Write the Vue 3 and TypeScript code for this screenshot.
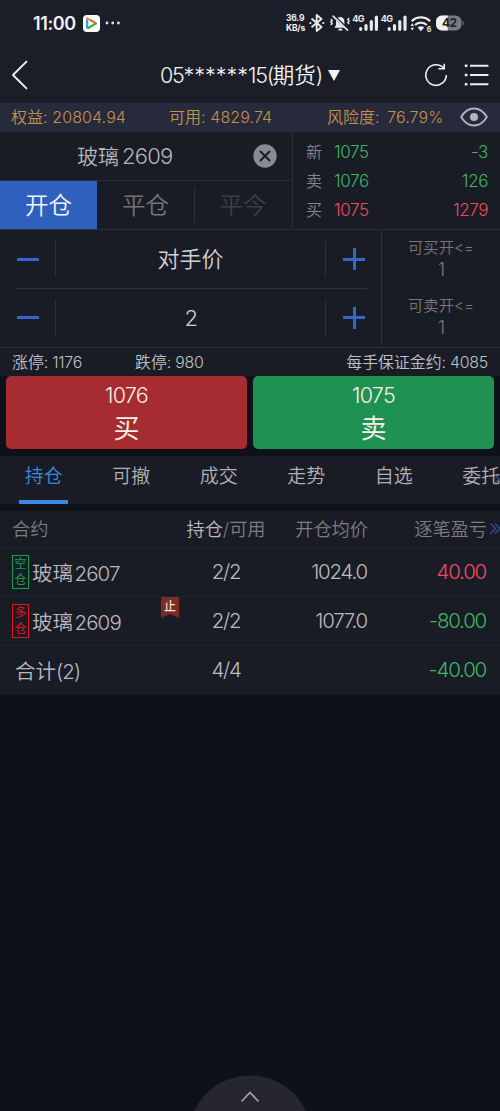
<script setup lang="ts">
interface Quote { label: string; price: string; volume: string; tone: string }
interface Position { side?: string; tone?: string; name: string; code: string; stop?: boolean; amount: string; price: string; profit: string; up?: boolean }

const quotes: Quote[] = [
  { label: '新', price: '1075', volume: '-3', tone: 'green' },
  { label: '卖', price: '1076', volume: '126', tone: 'green' },
  { label: '买', price: '1075', volume: '1279', tone: 'red' },
]
const steppers = [
  { value: '对手价', cls: 'cjk' },
  { value: '2', cls: 'num' },
]
const limits = [
  { label: '可买开<=', value: '1' },
  { label: '可卖开<=', value: '1' },
]
const tabs = ['持仓', '可撤', '成交', '走势', '自选', '委托']
const positions: Position[] = [
  { side: '空仓', tone: 'short', name: '玻璃', code: '2607', amount: '2/2', price: '1024.0', profit: '40.00', up: true },
  { side: '多仓', tone: 'long', name: '玻璃', code: '2609', stop: true, amount: '2/2', price: '1077.0', profit: '-80.00' },
  { name: '合计', code: '(2)', amount: '4/4', price: '', profit: '-40.00' },
]
</script>

<template>
  <div class="screen">
    <header class="status">
      <span class="clock">11:00</span>
      <svg class="app-icon" width="17" height="17" viewBox="0 0 17 17">
        <rect width="17" height="17" rx="4" fill="#fff" />
        <path d="M4.2 3.6v9" stroke="#2d9bf0" stroke-width="2.2" stroke-linecap="round" />
        <path d="M4.2 3.4 9 5.9" stroke="#ff9a2e" stroke-width="2.2" stroke-linecap="round" />
        <path d="M8 5.4 12.8 8.5" stroke="#f46a35" stroke-width="2.2" stroke-linecap="round" />
        <path d="M12.7 8.6 5.2 13" stroke="#35b34a" stroke-width="2.2" stroke-linecap="round" />
      </svg>
      <svg class="dots" width="16" height="4" viewBox="0 0 16 4" fill="#e4e6ea">
        <circle cx="2" cy="2" r="1.4" /><circle cx="7.700" cy="2" r="1.4" /><circle cx="13.400" cy="2" r="1.4" />
      </svg>
      <span class="speed"><b>36.9</b><b>KB/s</b></span>
      <svg class="signals" width="156" height="20" viewBox="0 0 156 20" fill="none" stroke="#e8eaed">
        <path d="M2.500 5.500 12.500 14 7.700 18V2l4.800 4L2.500 14.300" stroke-width="1.900" stroke-linejoin="round" />
        <path d="M1.300 10h.1M14.200 10h.1" stroke-width="2.200" stroke-linecap="round" />
        <g>
          <path d="M25.500 14.800h11.600l-1.700-2.700V8.200a4.200 4.200 0 0 0-8.400 0v3.900z" fill="#e8eaed" stroke="none" />
          <path d="M29.400 16.600h3.800" stroke-width="1.800" />
          <path d="M24.600 3 40 17.500" stroke="#1b1e28" stroke-width="3" />
          <path d="M23.600 2.600 39 17.600" stroke-width="1.600" />
          <path d="m21.800 6 1.400 1.500-1.400 1.500 1.400 1.500-1.400 1.500M40.200 5l-1.400 1.500 1.400 1.500-1.400 1.500 1.400 1.500" stroke-width="1.400" />
        </g>
        <g stroke-width="3.200" stroke-linecap="round">
          <path d="M51.700 15.500v.8M57 12.500v3.800M62.300 8.500v7.800M67.400 4v12.300" />
          <path d="M80.200 15.500v.8M85.500 12.500v3.800M90.800 8.500v7.800M96 4v12.300" />
        </g>
        <g fill="#e8eaed" stroke="none" class="net">
          <text x="43.200" y="8.500">4G</text><text x="71.700" y="8.500">4G</text>
        </g>
        <g stroke-width="2.300">
          <path d="M102.700 8.200a13 13 0 0 1 18.400 0M106 12a8.300 8.300 0 0 1 11.800 0" />
          <path d="m108.600 14.600 3.300 3.700 3.300-3.700a5 5 0 0 0-6.600 0z" fill="#e8eaed" stroke="none" />
          <path d="m101.500 13 1.800-2.800 1.800 2.800zM101.500 14.800l1.800 2.800 1.800-2.800z" fill="#e8eaed" stroke="none" />
        </g>
        <text x="117.800" y="18.500" class="six" fill="#e8eaed" stroke="none">6</text>
        <rect x="127" y="2.600" width="25.500" height="15" rx="6" fill="#797b80" stroke="none" />
        <path d="M133 2.600h5.800v15H133a6 6 0 0 1-6-6V8.600a6 6 0 0 1 6-6z" fill="#f0f1f3" stroke="none" />
        <path d="M153.500 7.500q2.500 2.600 0 5.200z" fill="#797b80" stroke="none" />
        <text x="133" y="14.400" class="battery" fill="#1b1e28" stroke="none">42</text>
      </svg>
    </header>

    <nav class="nav">
      <svg width="18" height="30" viewBox="0 0 18 30" fill="none" stroke="#f2f3f5" stroke-width="1.800" stroke-linecap="round" stroke-linejoin="round"><path d="M15.500 1.500 2 15l13.500 13.500" /></svg>
      <div class="account"><span class="num">05<span class="stars">******</span>15(</span>期货<span class="num">)</span><i class="caret"></i></div>
      <svg class="refresh" width="24" height="24" viewBox="0 0 24 24" fill="none" stroke="#eceef1" stroke-width="1.600"><path d="M22.400 12A10.300 10.300 0 1 1 19.800 5.200M14.500 5.800h5.800V.6" /></svg>
      <svg class="list" width="25" height="24" viewBox="0 0 25 24" stroke="#eceef1" stroke-width="1.800"><path d="M6 2.700h18.500M6 12h18.500M6 21.300h18.500" /><path d="M.8 2.700h2.600M.8 12h2.600M.8 21.300h2.600" stroke-width="2.600" /></svg>
    </nav>

    <section class="funds">
      <div class="equity">权益<span class="num">: 20804.94</span></div>
      <div class="free">可用<span class="num">: 4829.74</span></div>
      <div class="risk">风险度<span class="num">: 76.79%</span></div>
      <svg width="28" height="20" viewBox="0 0 28 20" fill="none" stroke="#b0b2bf" stroke-width="1.900"><path d="M1.200 10C4.500 4.300 8.800 1.500 14 1.500S23.500 4.300 26.800 10C23.500 15.700 19.200 18.500 14 18.500S4.500 15.700 1.200 10z" /><circle cx="14" cy="10" r="4" fill="#b0b2bf" stroke="none" /></svg>
    </section>

    <section class="market">
      <div class="contract">
        <div class="picker">
          <span class="symbol">玻璃<span class="num">2609</span></span>
          <svg width="24" height="24" viewBox="0 0 24 24"><circle cx="12" cy="12" r="11.700" fill="#8a8b90" /><path d="m7 7 10 10M17 7 7 17" stroke="#191c25" stroke-width="2" /></svg>
        </div>
        <div class="modes">
          <span class="mode active">开仓</span>
          <span class="mode">平仓</span>
          <span class="mode off">平今</span>
        </div>
      </div>
      <div class="quotes">
        <div v-for="q in quotes" :key="q.label" class="quote">
          <span>{{ q.label }}</span>
          <span class="num" :class="q.tone">{{ q.price }}</span>
          <span class="num vol" :class="q.tone">{{ q.volume }}</span>
        </div>
      </div>
    </section>

    <section class="order">
      <div class="steppers">
        <div v-for="s in steppers" :key="s.value" class="stepper">
          <i class="minus"></i>
          <span class="field" :class="s.cls">{{ s.value }}</span>
          <i class="plus"></i>
        </div>
      </div>
      <div class="limits">
        <div v-for="l in limits" :key="l.label" class="limit">
          <span>{{ l.label }}</span><span class="num one">{{ l.value }}</span>
        </div>
      </div>
    </section>

    <section class="bounds">
      <span class="ceil">涨停<span class="num">: 1176</span></span>
      <span>跌停<span class="num">: 980</span></span>
      <span class="margin">每手保证金约<span class="num">: 4085</span></span>
    </section>

    <section class="actions">
      <button class="buy"><span class="num">1076</span><b>买</b></button>
      <button class="sell"><span class="num">1075</span><b>卖</b></button>
    </section>

    <div class="tabs">
      <span v-for="(t, i) in tabs" :key="t" class="tab" :class="{ current: i === 0 }">{{ t }}</span>
      <svg class="more-mark" width="5" height="10" viewBox="0 0 5 10" fill="none" stroke="#2d50a5" stroke-width="1.300"><path d="m0 1 4 4-4 4" /></svg>
    </div>

    <section class="table">
      <div class="row head">
        <span class="name">合约</span>
        <span class="amount"><em>持仓</em>/可用</span>
        <span class="price">开仓均价</span>
        <span class="profit">逐笔盈亏</span>
        <svg width="10" height="13" viewBox="0 0 10 13" fill="none" stroke="#2d50a5" stroke-width="1.300"><path d="m.5 1.500 5 5-5 5M5 1.500l5 5-5 5" /></svg>
      </div>
      <div v-for="p in positions" :key="p.name + p.code" class="row">
        <span class="name" :class="{ total: !p.side }">
          <span v-if="p.side" class="side" :class="p.tone"><i v-for="c in p.side" :key="c">{{ c }}</i></span>
          <span>{{ p.name }}<span class="num code">{{ p.code }}</span></span>
          <svg v-if="p.stop" class="stop" width="18" height="21" viewBox="0 0 18 21"><path d="M0 0h18v21l-9-4-9 4z" fill="#7a2d20" /><text x="9" y="14" text-anchor="middle">止</text></svg>
        </span>
        <span class="amount num">{{ p.amount }}</span>
        <span class="price num">{{ p.price }}</span>
        <span class="profit num" :class="p.up ? 'red' : 'green'">{{ p.profit }}</span>
      </div>
    </section>

    <footer class="drawer">
      <div class="handle">
        <svg width="20" height="12" viewBox="0 0 20 12" fill="none" stroke="#a2a3a8" stroke-width="1.800"><path d="m1.500 10.500 8.500-9 8.500 9" /></svg>
      </div>
    </footer>
  </div>
</template>

<style>
body { background: #0e1119; }
</style>

<style scoped>
.screen {
  width: 500px; height: 1111px; display: flex; flex-direction: column; overflow: hidden;
  background: #0e1119; color: #c3c4c8; font-family: Inter, "Noto Sans CJK SC", sans-serif; font-weight: 350;
  white-space: nowrap; box-sizing: border-box;
}
.num { letter-spacing: -0.06em; font-weight: 350; }
.green { color: #3fb566; }
.red { color: #f04a62; }
i, em { font-style: normal; }

.status { height: 46px; flex: none; display: flex; align-items: center; padding-left: 33px; background: #1b1e28; color: #f0f1f3; }
.clock { width: 50px; font-size: 18px; font-weight: 600; letter-spacing: -.4px; }
.dots { margin-left: 5px; }
.speed { display: flex; flex-direction: column; margin-left: 165px; width: 21px; font-size: 8.500px; line-height: 10px; letter-spacing: -.2px; }
.speed b { font-weight: 700; }
.signals { margin-left: 2px; }
.net { font-size: 9px; font-weight: 700; letter-spacing: -.4px; }
.six { font-size: 7px; font-weight: 700; }
.battery { font-size: 12px; font-weight: 700; letter-spacing: -.5px; }

.nav { height: 57px; flex: none; display: flex; align-items: center; padding: 1px 11px 0 11px; box-sizing: border-box; background: #1b1e28; color: #f2f3f5; }
.account { display: flex; align-items: center; margin-left: 131px; font-size: 21.500px; line-height: 30px; width: 265px; }
.account .stars { letter-spacing: 0; }
.caret { margin-left: 6px; border: 6.500px solid transparent; border-top: 11px solid #f2f3f5; border-bottom: 0; }
.list { margin-left: 16px; }

.funds { height: 29px; flex: none; display: flex; align-items: center; padding-left: 11px; background: #262a3b; color: #c5924c; font-size: 16px; }
.funds div { line-height: 29px; }
.funds .num { letter-spacing: .1px; }
.funds svg { margin-top: -1px; }
.equity { width: 158px; }
.free { width: 158px; }
.risk { width: 133px; word-spacing: 3px; }

.market { height: 98px; flex: none; display: flex; background: #191c25; border-bottom: 1px solid #2c2f38; box-sizing: border-box; }
.contract { width: 293px; border-right: 1px solid #2c2f38; box-sizing: border-box; }
.picker { height: 49px; display: flex; align-items: center; padding-left: 77px; box-sizing: border-box; border-bottom: 1px solid #2c2f38; color: #b4b5ba; font-size: 21px; }
.symbol { width: 176px; margin-top: -2px; }
.symbol .num { margin-left: 3px; font-size: 22px; letter-spacing: -.8px; }
.modes { height: 48px; display: flex; }
.mode { width: 97px; font-size: 23.500px; line-height: 50px; text-align: center; color: #73757c; }
.mode.active { background: #3060bd; color: #f4f6fa; }
.mode.off { color: #3c3f48; border-left: 1px solid #2c2f38; box-sizing: border-box; height: 36px; margin-top: 6px; line-height: 38px; }
.quotes { flex: 1; padding: 6px 12px 0 13px; }
.quote { display: flex; height: 29px; line-height: 29px; font-size: 16px; color: #85868c; }
.quote .num { margin-left: 12px; font-size: 17px; letter-spacing: -.4px; }
.quote .num.red { color: #f04a62; }
.quote .num.green { color: #3fb566; }
.quote .num.vol { margin-left: auto; }

.order { height: 118px; flex: none; display: flex; background: #191c25; border-bottom: 1px solid #2c2f38; box-sizing: border-box; }
.steppers { width: 381px; border-right: 1px solid #2c2f38; }
.stepper { height: 57px; display: flex; align-items: center; margin: 0 14px 0 16px; padding-left: 1px; }
.stepper:first-child { height: 58px; border-bottom: 1px solid #2c2f38; }
.minus, .plus { width: 22px; height: 3px; flex: none; background: #3765c9; }
.plus { position: relative; margin-left: 17px; }
.plus::after { content: ""; position: absolute; left: 9.500px; top: -9.500px; width: 3px; height: 22px; background: #3765c9; }
.field { width: 269px; margin-left: 16px; height: 36px; line-height: 36px; text-align: center; font-size: 22px; border: 1px solid #2c2f38; border-width: 0 1px; color: #d0d1d5; }
.limits { flex: 1; }
.limit { height: 58px; padding-top: 6px; box-sizing: border-box; display: flex; flex-direction: column; align-items: center; font-size: 15.300px; line-height: 23px; color: #75777d; }
.one { font-size: 18px; line-height: 22px; }

.bounds { height: 28px; flex: none; display: flex; padding: 0 12px; background: #191c25; line-height: 29px; font-size: 15.900px; color: #c0c1c5; }
.bounds .num { letter-spacing: -.25px; }
.ceil { width: 123px; }
.margin { margin-left: auto; }

.actions { display: flex; gap: 6px; height: 80px; flex: none; padding: 0 6px 7px; box-sizing: border-box; background: #0e1119; }
.actions button { flex: 1; display: flex; flex-direction: column; align-items: center; border: 0; padding: 3px 0 0; border-radius: 5px; color: #f7efe9; font: 350 21.500px/33px Inter, "Noto Sans CJK SC", sans-serif; }
.actions .num { letter-spacing: -.7px; }
.actions b { font-weight: 400; font-size: 26px; line-height: 33px; }
.buy { background: #a62c31; }
.sell { background: #1f9150; }

.tabs { height: 48px; flex: none; position: relative; display: flex; overflow: hidden; background: #191c25; font-size: 19px; line-height: 42px; color: #aeb0b5; }
.tab { width: 87.500px; flex: none; text-align: center; height: 48px; }
.tab.current { position: relative; color: #3c87df; }
.tab.current::after { content: ""; position: absolute; left: 19px; bottom: 0; width: 49px; height: 4px; background: #3c87df; }
.more-mark { position: absolute; right: 0; top: 18px; }

.table { margin-top: 7px; background: #191c25; border-bottom: 1px solid #171923; }
.row { display: grid; grid-template-columns: 180px 92px 96px 119px 13px; align-items: center; height: 49px; padding-bottom: 1px; box-sizing: border-box; border-top: 1px solid #20232c; font-size: 20.500px; color: #b9bac0; }
.head { height: 36px; border: 0; padding-bottom: 2px; font-size: 18.200px; color: #7b7d83; }
.head .name { padding-left: 12px; }
.head em { color: #b9bac0; }
.head svg { margin-left: 3px; }
.name { display: flex; align-items: center; height: 100%; padding-left: 12px; box-sizing: border-box; font-size: inherit; }
.name.total { padding-left: 15px; }
.code { margin-left: 1.500px; letter-spacing: -.9px; }
.total .code { margin-left: 0; }
.side { display: flex; flex-direction: column; align-items: center; width: 17px; height: 34px; margin-right: 3px; box-sizing: border-box; border: 1px solid; font-size: 12px; font-weight: 400; line-height: 16px; }
.side.short { color: #10a04e; }
.side.long { color: #e3131a; }
.stop { margin: 0 1px auto auto; }
.stop text { fill: #eedfd8; font: 500 12px "Noto Sans CJK SC", sans-serif; }
.amount { text-align: center; }
.price, .profit { text-align: right; }
.price.num, .profit.num { padding-right: 1px; }

.drawer { flex: 1; display: flex; align-items: flex-end; justify-content: center; }
.handle { width: 124px; height: 36px; display: flex; justify-content: center; padding-top: 16px; box-sizing: border-box; background: radial-gradient(circle 62px at 50% 62px, #25262f 61px, transparent 62px); }
</style>
